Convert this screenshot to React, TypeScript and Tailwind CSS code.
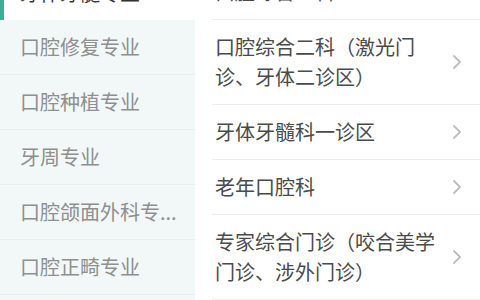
import React from "react";

const left = [
  { name: "牙体牙髓专业", active: true },
  { name: "口腔修复专业" },
  { name: "口腔种植专业" },
  { name: "牙周专业" },
  { name: "口腔颌面外科专..." },
  { name: "口腔正畸专业" },
];

const right = [
  { name: "口腔综合一科", tall: false },
  { name: "口腔综合二科（激光门诊、牙体二诊区）", tall: true },
  { name: "牙体牙髓科一诊区", tall: false },
  { name: "老年口腔科", tall: false },
  { name: "专家综合门诊（咬合美学门诊、涉外门诊）", tall: true },
  { name: "特需门诊", tall: false },
];

function Chevron() {
  return (
    <svg width="10" height="16" viewBox="0 0 10 16" fill="none">
      <path d="M2 2 L8 8 L2 14" stroke="#bdbdbd" strokeWidth="1.8" strokeLinecap="round" strokeLinejoin="round" />
    </svg>
  );
}

export default function App() {
  return (
    <div
      className="flex h-[300px] w-[480px] overflow-hidden bg-white"
      style={{ fontFamily: '"Noto Sans CJK SC", "Noto Sans", sans-serif' }}
    >
      <div className="flex w-[195px] shrink-0 flex-col bg-[#f2f8f7] -mt-[35px]">
        {left.map((it, i) =>
          it.active ? (
            <div key={i} className="relative flex h-[55px] shrink-0 items-center bg-white pl-[20px] text-[20px] text-[#333333]">
              <div className="absolute left-0 top-0 h-full w-[4px] bg-[#3fae98]" />
              {it.name}
            </div>
          ) : (
            <div
              key={i}
              className="flex h-[55px] shrink-0 items-center border-b border-[#e6efed] pl-[20px] text-[20px] text-[#8f8f8f] whitespace-nowrap"
            >
              {it.name}
            </div>
          )
        )}
      </div>
      <div className="flex flex-1 flex-col -mt-[35px] pl-[17px]">
        {right.map((it, i) => (
          <div
            key={i}
            className={`flex shrink-0 items-center justify-between border-b border-[#ececec] pl-[3px] pr-[18px] ${
              it.tall ? "h-[85px]" : "h-[55px]"
            }`}
          >
            <div className="w-[230px] text-[20px] leading-[30px] text-[#4a4a4a]">{it.name}</div>
            <Chevron />
          </div>
        ))}
      </div>
    </div>
  );
}
